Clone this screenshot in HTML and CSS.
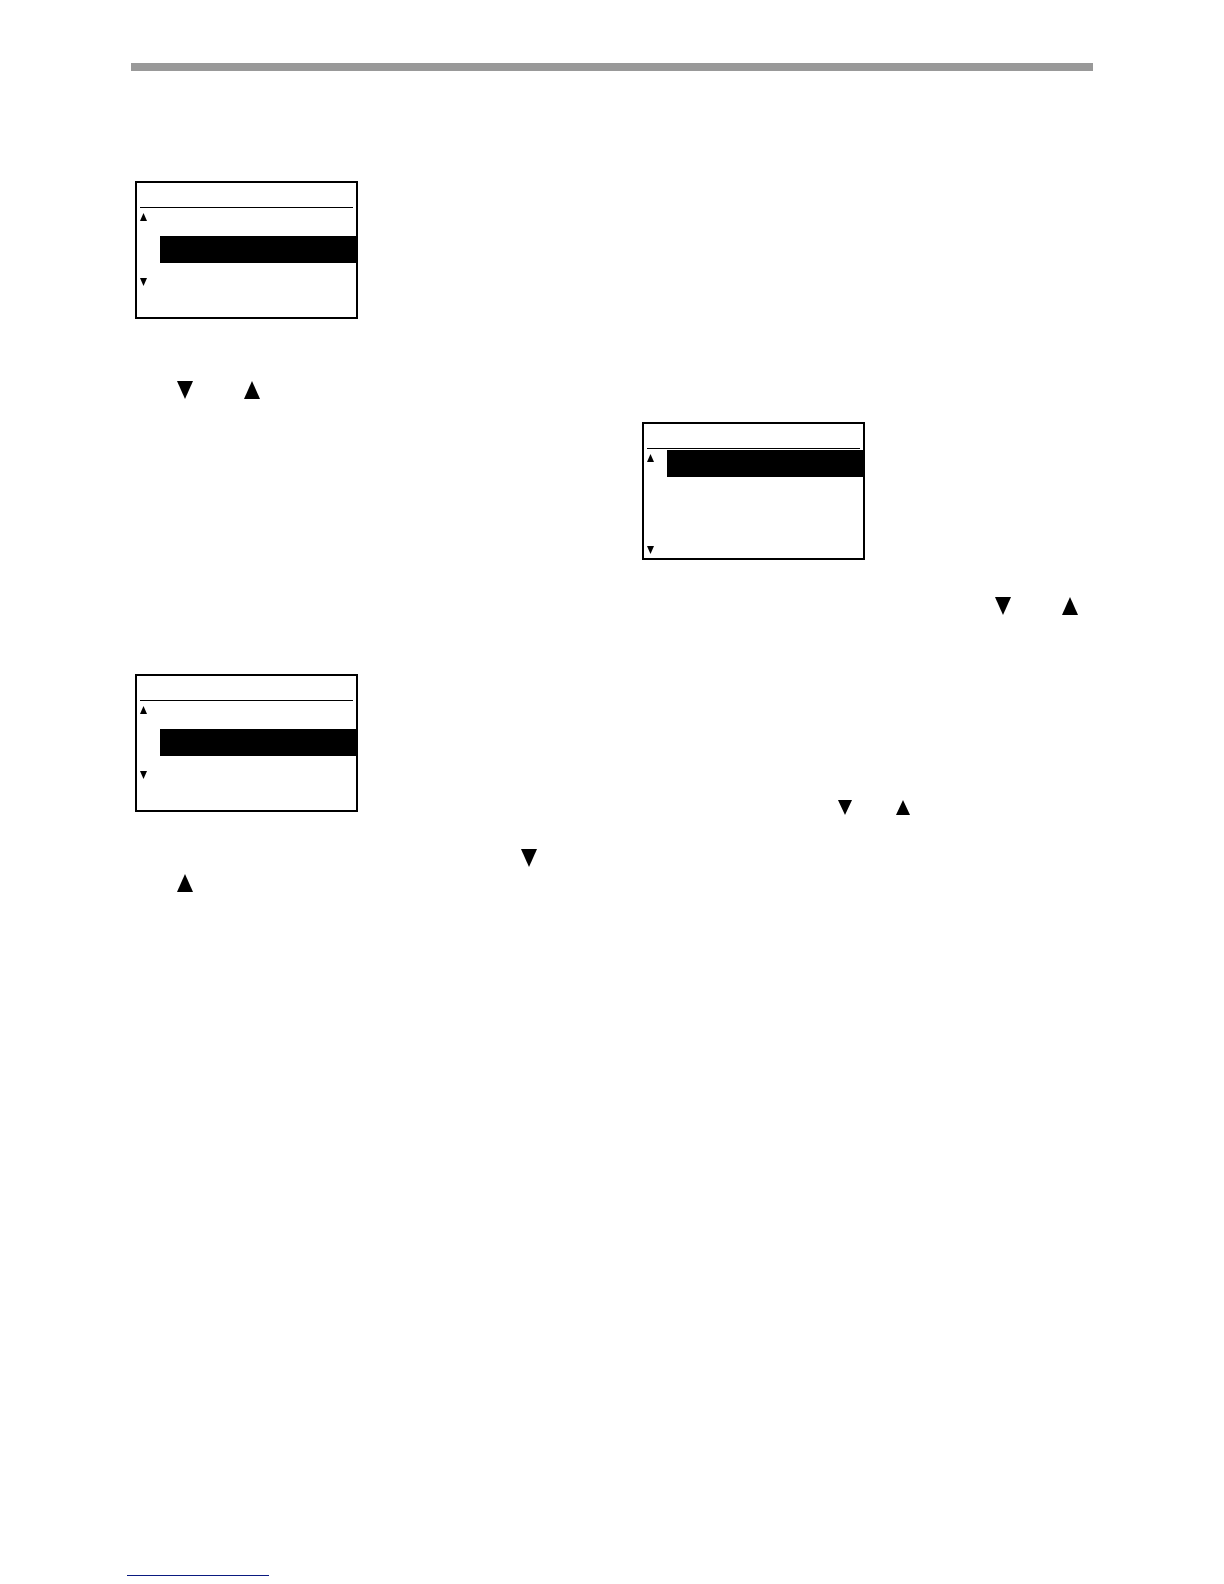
FILE: index.html
```
<!DOCTYPE html>
<html lang="en">
<head>
    <meta charset="UTF-8">
    <meta name="viewport" content="width=device-width, initial-scale=1.0">
    <title>Menu Settings</title>
    <link rel="stylesheet" href="styles.css">
</head>
<body>
    <div class="page">
        <header class="page-rule"></header>

        <main class="columns">
            <section class="column">
                <div class="screen">
                    <div class="screen-title"></div>
                    <ul class="menu">
                        <li class="menu-row"><span class="marker"><svg class="arrow-tiny" viewBox="0 0 14 16"><path d="M7 0L14 16H0z"/></svg></span><span class="item"></span></li>
                        <li class="menu-row"><span class="marker"></span><span class="item selected"></span></li>
                        <li class="menu-row"><span class="marker marker-down"><svg class="arrow-tiny" viewBox="0 0 14 16"><path d="M0 0H14L7 16z"/></svg></span><span class="item"></span></li>
                        <li class="menu-row"><span class="marker"></span><span class="item"></span></li>
                    </ul>
                </div>

                <div class="step step-select">
                    <svg class="arrow" viewBox="0 0 16 18"><path d="M0 0H16L8 18z"/></svg>
                    <svg class="arrow" viewBox="0 0 16 18"><path d="M8 0L16 18H0z"/></svg>
                </div>

                <div class="screen">
                    <div class="screen-title"></div>
                    <ul class="menu">
                        <li class="menu-row"><span class="marker"><svg class="arrow-tiny" viewBox="0 0 14 16"><path d="M7 0L14 16H0z"/></svg></span><span class="item"></span></li>
                        <li class="menu-row"><span class="marker"></span><span class="item selected"></span></li>
                        <li class="menu-row"><span class="marker marker-down"><svg class="arrow-tiny" viewBox="0 0 14 16"><path d="M0 0H14L7 16z"/></svg></span><span class="item"></span></li>
                        <li class="menu-row"><span class="marker"></span><span class="item"></span></li>
                    </ul>
                </div>

                <!-- the arrow pair breaks over two lines -->
                <div class="step step-wrapped">
                    <div class="line line-end">
                        <svg class="arrow" viewBox="0 0 16 18"><path d="M0 0H16L8 18z"/></svg>
                    </div>
                    <div class="line">
                        <svg class="arrow" viewBox="0 0 16 18"><path d="M8 0L16 18H0z"/></svg>
                    </div>
                </div>
            </section>

            <section class="column column-right">
                <div class="screen">
                    <div class="screen-title"></div>
                    <ul class="menu">
                        <li class="menu-row"><span class="marker"><svg class="arrow-tiny" viewBox="0 0 14 16"><path d="M7 0L14 16H0z"/></svg></span><span class="item selected"></span></li>
                        <li class="menu-row"><span class="marker"></span><span class="item"></span></li>
                        <li class="menu-row"><span class="marker"></span><span class="item"></span></li>
                        <li class="menu-row"><span class="marker marker-down"><svg class="arrow-tiny" viewBox="0 0 14 16"><path d="M0 0H14L7 16z"/></svg></span><span class="item"></span></li>
                    </ul>
                </div>

                <div class="step step-scroll">
                    <svg class="arrow" viewBox="0 0 16 18"><path d="M0 0H16L8 18z"/></svg>
                    <svg class="arrow" viewBox="0 0 16 18"><path d="M8 0L16 18H0z"/></svg>
                </div>

                <div class="step step-note">
                    <svg class="arrow-small" viewBox="0 0 14 15"><path d="M0 0H14L7 15z"/></svg>
                    <svg class="arrow-small" viewBox="0 0 14 15"><path d="M7 0L14 15H0z"/></svg>
                </div>
            </section>
        </main>

        <footer class="page-footer">
            <a class="footer-link" href="#" aria-label="Contents"></a>
        </footer>
    </div>
</body>
</html>
```
FILE: styles.css
```
* {
    box-sizing: border-box;
}

body {
    margin: 0;
    background-color: #fff;
    font-family: "Liberation Sans", Arial, sans-serif;
}

.page {
    display: flex;
    flex-direction: column;
    min-height: 100vh;
    padding: 63px 131px 8px;
}

.page-rule {
    height: 8px;
    background-color: #999;
}

.columns {
    display: grid;
    grid-template-columns: 1fr 1fr;
    gap: 52px;
    padding-top: 110px;
}

.column-right {
    padding-top: 241px;
}

/* LCD screens */
.screen {
    width: 223px;
    margin-left: 4px;
    border: 2px solid #000;
}

.screen-title {
    height: 25px;
    margin: 0 3px 1px;
    border-bottom: 1px solid #000;
}

.menu {
    margin: 0;
    padding: 0;
    list-style: none;
}

.menu-row {
    display: flex;
    height: 27px;
}

.marker {
    display: flex;
    align-items: flex-start;
    width: 23px;
    padding: 4px 3px;
}

.marker-down {
    align-items: flex-end;
}

.item {
    flex: 1;
}

.selected {
    background-color: #000;
}

/* Arrow keys */
.arrow {
    width: 16px;
    height: 18px;
}

.arrow-small {
    width: 14px;
    height: 15px;
}

.arrow-tiny {
    width: 7px;
    height: 8px;
}

.step {
    display: flex;
    gap: 51px;
}

.step-select {
    padding: 62px 0 275px 46px;
}

.step-wrapped {
    flex-direction: column;
    gap: 7px;
    padding: 37px 49px 0 46px;
}

.line {
    display: flex;
}

.line-end {
    justify-content: flex-end;
}

.step-scroll {
    justify-content: flex-end;
    padding: 37px 15px 185px 0;
}

.step-note {
    gap: 44px;
    padding-left: 200px;
}

.page-footer {
    margin: auto 0 0 -4px;
}

.footer-link {
    display: block;
    width: 142px;
    border-bottom: 1px solid #0a1a80;
}
```
